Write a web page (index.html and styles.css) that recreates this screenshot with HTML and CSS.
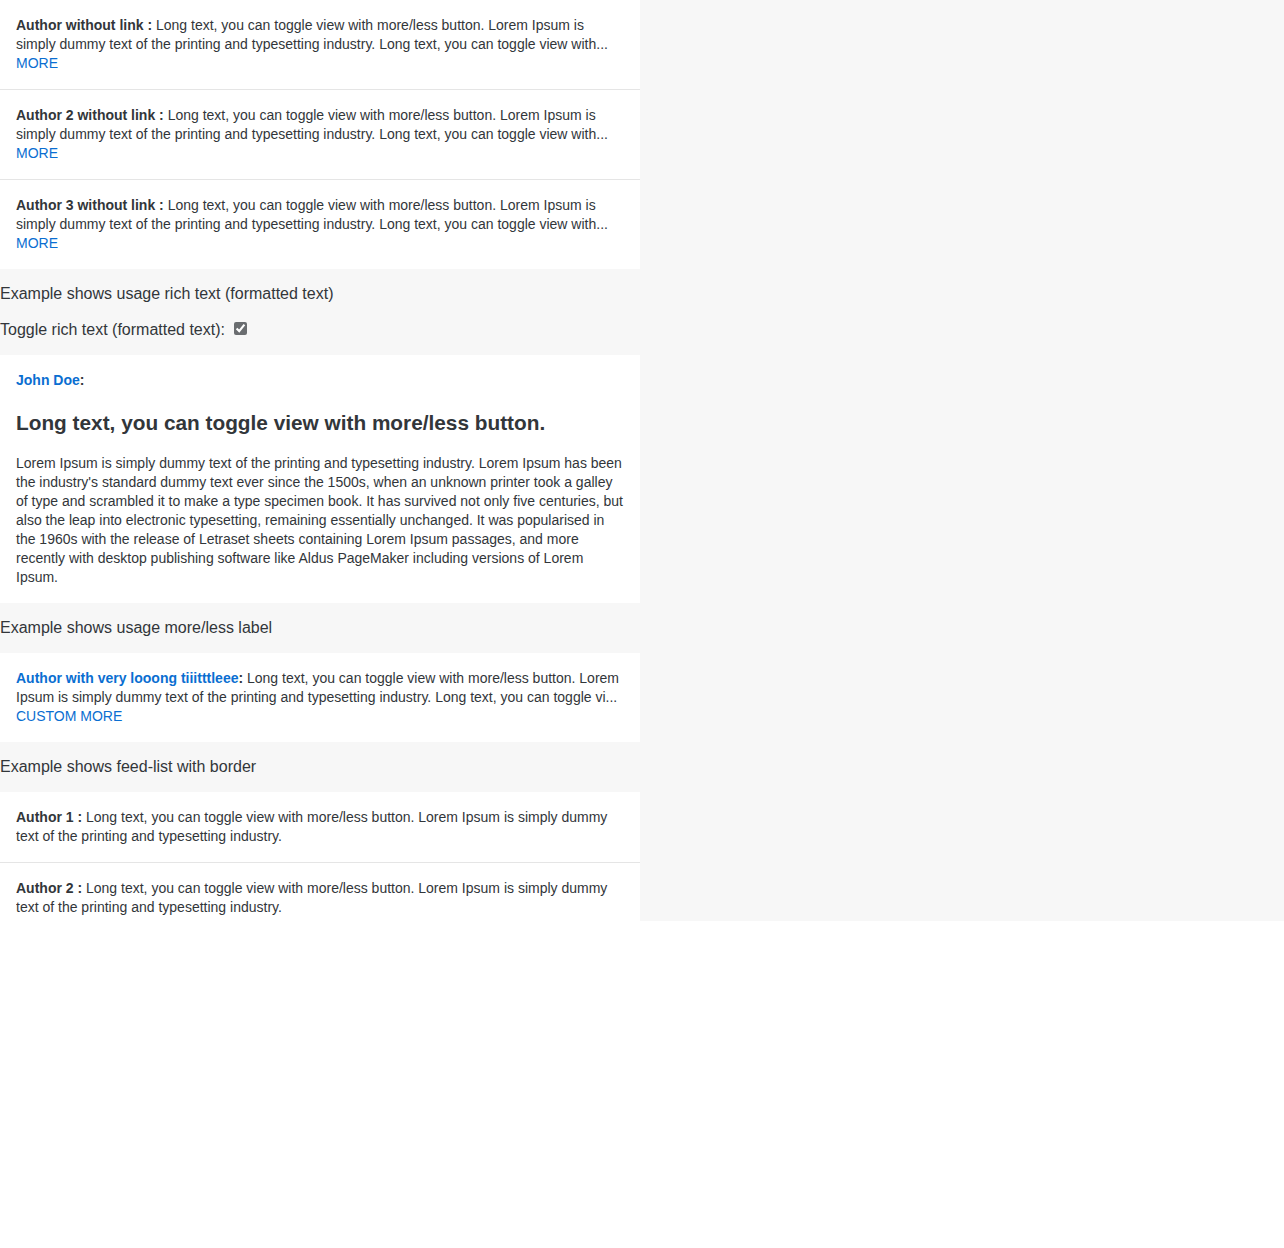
FILE: index.html
```html
<!DOCTYPE html>
<html lang="en">
<head>
<meta charset="utf-8">
<title>Feed list</title>
<link rel="stylesheet" href="styles.css">
</head>
<body>
<div class="page">
  <ul class="feed-list">
    <li class="feed-item">
      <p class="feed-text"><b class="author">Author without link :</b> Long text, you can toggle view with more/less button. Lorem Ipsum is simply dummy text of the printing and typesetting industry. Long text, you can toggle view with...</p>
      <a class="toggle-link" href="#">MORE</a>
    </li>
    <li class="feed-item">
      <p class="feed-text"><b class="author">Author 2 without link :</b> Long text, you can toggle view with more/less button. Lorem Ipsum is simply dummy text of the printing and typesetting industry. Long text, you can toggle view with...</p>
      <a class="toggle-link" href="#">MORE</a>
    </li>
    <li class="feed-item last">
      <p class="feed-text"><b class="author">Author 3 without link :</b> Long text, you can toggle view with more/less button. Lorem Ipsum is simply dummy text of the printing and typesetting industry. Long text, you can toggle view with...</p>
      <a class="toggle-link" href="#">MORE</a>
    </li>
  </ul>

  <div class="demo-title">Example shows usage rich text (formatted text)</div>
  <label class="toggle-row">Toggle rich text (formatted text): <input class="checkbox" type="checkbox" checked></label>

  <div class="rich-item">
    <div class="rich-author"><a class="author-link" href="#">John Doe</a>:</div>
    <h2 class="rich-heading">Long text, you can toggle view with more/less button.</h2>
    <p class="rich-text">Lorem Ipsum is simply dummy text of the printing and typesetting industry. Lorem Ipsum has been the industry's standard dummy text ever since the 1500s, when an unknown printer took a galley of type and scrambled it to make a type specimen book. It has survived not only five centuries, but also the leap into electronic typesetting, remaining essentially unchanged. It was popularised in the 1960s with the release of Letraset sheets containing Lorem Ipsum passages, and more recently with desktop publishing software like Aldus PageMaker including versions of Lorem Ipsum.</p>
  </div>

  <div class="demo-title second">Example shows usage more/less label</div>
  <ul class="feed-list">
    <li class="feed-item last">
      <p class="feed-text"><b class="author"><a class="author-link" href="#">Author with very looong tiiitttleee</a>:</b> Long text, you can toggle view with more/less button. Lorem Ipsum is simply dummy text of the printing and typesetting industry. Long text, you can toggle vi...</p>
      <a class="toggle-link" href="#">CUSTOM MORE</a>
    </li>
  </ul>

  <div class="demo-title second">Example shows feed-list with border</div>
  <ul class="feed-list">
    <li class="feed-item">
      <p class="feed-text"><b class="author">Author 1 :</b> Long text, you can toggle view with more/less button. Lorem Ipsum is simply dummy text of the printing and typesetting industry.</p>
    </li>
    <li class="feed-item last">
      <p class="feed-text"><b class="author">Author 2 :</b> Long text, you can toggle view with more/less button. Lorem Ipsum is simply dummy text of the printing and typesetting industry.</p>
    </li>
  </ul>
</div>
</body>
</html>
```
FILE: styles.css
```css
html, body {
  margin: 0;
  padding: 0;
  background: #ffffff;
}

body {
  font-family: "Liberation Sans", Arial, sans-serif;
  color: #32363a;
}

.page {
  background: #f7f7f7;
  height: 921px;
}

.feed-list {
  list-style: none;
  margin: 0;
  padding: 0;
  width: 640px;
  background: #ffffff;
}

.feed-item {
  padding: 16px;
  border-bottom: 1px solid #e5e5e5;
  font-size: 14px;
  line-height: 19px;
}

.feed-item.last {
  border-bottom: none;
}

.feed-text {
  margin: 0;
  display: -webkit-box;
  -webkit-box-orient: vertical;
  -webkit-line-clamp: 2;
  overflow: hidden;
}

.author {
  font-weight: 700;
}

.author-link {
  color: #0a6ed1;
  text-decoration: none;
  font-weight: 700;
}

.toggle-link {
  display: block;
  color: #0a6ed1;
  text-decoration: none;
  width: max-content;
}

.demo-title {
  font-size: 16px;
  line-height: 18px;
  padding: 16px 0 17px;
}

.demo-title.second {
  padding: 16px 0 16px;
}

.toggle-row {
  display: block;
  font-size: 16px;
  line-height: 18px;
  padding: 1px 0 16px;
}

.checkbox {
  margin: 0 3px 0 5px;
  width: 13px;
  height: 13px;
  vertical-align: 0;
  accent-color: #6a6d70;
}

.rich-item {
  width: 640px;
  box-sizing: border-box;
  background: #ffffff;
  padding: 16px;
  font-size: 14px;
  line-height: 19px;
}

.rich-author {
  font-weight: 700;
}

.rich-heading {
  margin: 21px 0 19px;
  font-size: 20.8px;
  line-height: 24px;
  font-weight: 700;
}

.rich-text {
  margin: 0;
}
```
